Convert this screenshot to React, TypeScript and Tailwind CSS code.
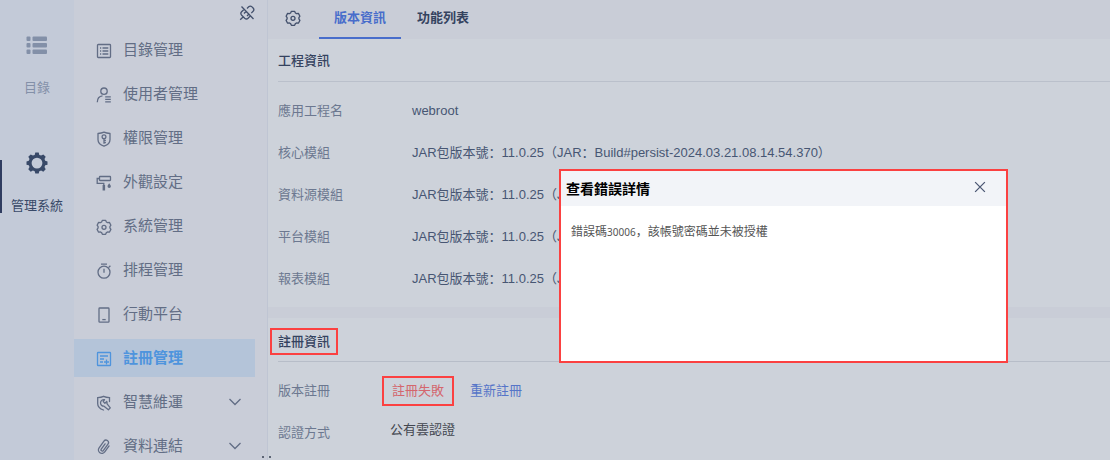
import { useState, type ReactNode } from "react";
import clsx from "clsx";

function Icon({ children, className }: { children: ReactNode; className?: string }) {
  return (
    <svg
      viewBox="0 0 16 16"
      fill="none"
      stroke="currentColor"
      strokeWidth="1.3"
      aria-hidden="true"
      className={clsx("shrink-0", className ?? "size-4")}
    >
      {children}
    </svg>
  );
}

const hexGear = (
  <>
    <path
      strokeLinejoin="round"
      d="M6.400 1.300h3.200l.8 1.700 1.100.6 1.900-.2 1.500 2.800-1 1.500v1.200l1 1.500-1.500 2.800-1.900-.2-1.100.6-.8 1.700H6.400l-.8-1.700-1.100-.6-1.900.2-1.500-2.800 1-1.500V7.700l-1-1.500 1.500-2.800 1.900.2 1.100-.6z"
    />
    <circle cx="8" cy="8.300" r="2" />
  </>
);

type Item = { label: string; icon: ReactNode; more?: boolean };

const items: Item[] = [
  {
    label: "目錄管理",
    icon: (
      <>
        <rect x="1.500" y="1.500" width="13" height="13" rx=".8" />
        <path d="M4 5h1.200M4 8h1.200M4 11h1.200M6.500 5h5.800M6.500 8h5.800M6.500 11h5.800" />
      </>
    ),
  },
  {
    label: "使用者管理",
    icon: (
      <>
        <circle cx="8" cy="4.200" r="3.200" />
        <path d="M1.300 15.300c0-3.600 2-6 5.200-6.400M9.200 9.800h5.600M9.200 12.300h5.600M9.200 14.800h5.600" />
      </>
    ),
  },
  {
    label: "權限管理",
    icon: (
      <>
        <path strokeLinejoin="round" d="M8 1.200c2 .9 4 1.200 6 1.300v6.300c0 3-2.500 5.200-6 6.400-3.500-1.200-6-3.400-6-6.400V2.500c2-.1 4-.4 6-1.300z" />
        <circle cx="8" cy="5.800" r="1.900" />
        <path d="M8 7.700v5M8 9.500h1.900M8 11.700h1.900" />
      </>
    ),
  },
  {
    label: "外觀設定",
    icon: (
      <>
        <rect x="3.500" y="1.500" width="11" height="4" rx=".5" />
        <path d="M3.500 3.500H1.200v4.800h6.600v2" />
        <path d="M6.600 10h2.500v5.500H6.600z" fill="currentColor" stroke="none" />
        <path d="M13.200 8.200c1 1.400 1.700 2.200 1.700 3.100a1.700 1.700 0 0 1-3.400 0c0-.9.7-1.700 1.700-3.100z" fill="currentColor" stroke="none" />
      </>
    ),
  },
  { label: "系統管理", icon: hexGear },
  {
    label: "排程管理",
    icon: (
      <>
        <circle cx="8" cy="9.200" r="6" />
        <path d="M5 1.200h6M8 5.800v4M12.500 4.600l1.900-1.900" />
      </>
    ),
  },
  {
    label: "行動平台",
    icon: (
      <>
        <rect x="3" y="1" width="10" height="14.200" rx=".8" />
        <path d="M6.300 12.600h3.400" />
      </>
    ),
  },
  {
    label: "註冊管理",
    icon: (
      <>
        <rect x="1.500" y="1.500" width="13" height="13" rx=".6" />
        <path d="M4 5h8M4 8h4M4 11h3M8 11h5M10.500 8.500v5" />
      </>
    ),
  },
  {
    label: "智慧維運",
    more: true,
    icon: (
      <>
        <path strokeLinecap="round" d="M7.500 15C4 13.800 1.700 11.700 1.700 8.700V2.600c2.200-.1 4-.4 5.900-1.300 1.900.9 3.800 1.200 5.900 1.300v4" />
        <path strokeLinejoin="round" d="M8.600 4.700a3.300 3.300 0 1 0-.6 6.500l4.400 3.600 1.900-1.900-3.400-4.200c.3-.8.2-1.600-.1-2.300L8.900 8.200 7.200 6.600z" />
      </>
    ),
  },
  {
    label: "資料連結",
    more: true,
    icon: (
      <path
        strokeLinecap="round"
        transform="rotate(36 8 8)"
        d="M11.500 4.200v7.300a3.500 3.500 0 0 1-7 0V3.300a2.500 2.500 0 0 1 5 0v8a1.250 1.250 0 0 1-2.500 0V4.800"
      />
    ),
  },
];

const build = "JAR包版本號：11.0.25（JAR：Build#persist-2024.03.21.08.14.54.370）";
const shortBuild = "JAR包版本號：11.0.25（J";

const modules = [
  ["應用工程名", "webroot"],
  ["核心模組", build],
  ["資料源模組", shortBuild],
  ["平台模組", shortBuild],
  ["報表模組", shortBuild],
];

function Rail() {
  return (
    <nav className="flex w-[74px] shrink-0 flex-col bg-[#c3cad8] pt-[33px] text-[13px] leading-5">
      <a href="#catalog" className="flex flex-col items-center gap-[21px] text-[#8390a8]">
        <svg viewBox="0 0 22 24" className="h-6 w-[22px]" fill="currentColor" aria-hidden="true">
          <rect x="0.500" y="3.500" width="4" height="4.500" rx="1" />
          <rect x="6.500" y="3.500" width="14.500" height="4.500" rx="1" />
          <rect x="0.500" y="10" width="4" height="4.500" rx="1" />
          <rect x="6.500" y="10" width="14.500" height="4.500" rx="1" />
          <rect x="0.500" y="16.500" width="4" height="4.500" rx="1" />
          <rect x="6.500" y="16.500" width="14.500" height="4.500" rx="1" />
        </svg>
        目錄
      </a>
      <a
        href="#system"
        className="relative mt-[53px] flex flex-col items-center gap-[21px] text-[#384968] before:absolute before:top-[9px] before:left-0 before:h-[53px] before:w-[2px] before:bg-[#2f3c60]"
      >
        <svg viewBox="0 0 24 24" className="size-6" fill="currentColor" fillRule="evenodd" aria-hidden="true">
          <path d="M10.300 1.500h3.400l.6 2.400 1.800.7 2.200-1.200 2.400 2.400-1.200 2.200.7 1.800 2.300.6v3.300l-2.300.6-.7 1.800 1.200 2.200-2.400 2.400-2.200-1.200-1.800.7-.6 2.300h-3.400l-.6-2.300-1.800-.7-2.200 1.200-2.400-2.400 1.200-2.200-.7-1.800-2.300-.6v-3.300l2.300-.6.7-1.800-1.200-2.200 2.400-2.400 2.200 1.200 1.800-.7zM12 6.700a5.400 5.400 0 1 0 0 10.800 5.400 5.400 0 0 0 0-10.800z" />
        </svg>
        管理系統
      </a>
    </nav>
  );
}

function Sidebar() {
  return (
    <aside className="relative w-[194px] shrink-0 border-r border-[#bfc5d3] bg-[#c9cdd8] pt-7 text-[#626d85]">
      <button type="button" aria-label="取消固定" className="absolute top-[5px] right-3 text-[#43506c]">
        <Icon>
          <path strokeLinejoin="round" d="M5.200 4.200 2.600 6.800c-1 1.100-.9 2.400.1 3.400l3 3c1.100 1 2.400 1 3.400 0l2.500-2.600M8 3.500l1.700-1.700c1.100-1 2.300-.9 3.300.1l1.100 1.100c1 1.100 1 2.300 0 3.300l-1.800 1.800M1.200 14.800l2.600-2.600M5 8.500 7 6.500M8 11l1.500-1.500M2.500 1.500l12 12.500" />
        </Icon>
      </button>
      <ul>
        {items.map((item) => {
          const active = item.label === "註冊管理";
          return (
            <li key={item.label} className="py-[3px] pr-3">
              <a
                href={`#${item.label}`}
                aria-current={active ? "page" : undefined}
                className={clsx(
                  "flex h-[38px] items-center pr-3 pl-[22px] text-[15px] leading-6",
                  active && "bg-[#b4c4d9] font-bold text-[#4e94dd]",
                )}
              >
                <Icon className="mt-[2px] size-4">{item.icon}</Icon>
                <span className="ml-[11px] flex-1">{item.label}</span>
                {item.more && (
                  <Icon className="size-4">
                    <path d="m2.500 5 5.500 5.500L13.500 5" />
                  </Icon>
                )}
              </a>
            </li>
          );
        })}
      </ul>
      <span className="absolute -right-1 bottom-[2px] z-10 flex gap-[5px]" aria-hidden="true">
        <i className="size-[2px] bg-[#5d6575]" />
        <i className="size-[2px] bg-[#5d6575]" />
      </span>
    </aside>
  );
}

function Dialog({ onClose }: { onClose: () => void }) {
  return (
    <section
      role="dialog"
      aria-labelledby="dialog-title"
      className="absolute top-[169px] right-[102px] z-20 flex h-[194px] w-[449px] flex-col border-2 border-[#fb4141] bg-white"
    >
      <header className="flex h-[35px] shrink-0 items-center justify-between bg-[#f2f4f8] pr-5 pl-[5px]">
        <h2 id="dialog-title" className="text-[14px] leading-5 font-bold text-black">
          查看錯誤詳情
        </h2>
        <button type="button" aria-label="關閉" onClick={onClose} className="mb-1 text-[#4a5672]">
          <Icon className="size-3">
            <path strokeWidth="1.700" d="m1.500 1.500 13 13M14.500 1.500l-13 13" />
          </Icon>
        </button>
      </header>
      <p className="px-[10px] pt-4 font-['Noto_Sans','Noto_Sans_CJK_SC',sans-serif] text-[12px] leading-5 text-[#555]">
        錯誤碼<span className="text-[10px]">30006</span>，該帳號密碼並未被授權
      </p>
    </section>
  );
}

export default function App() {
  const [open, setOpen] = useState(true);
  return (
    <div className="relative h-screen overflow-hidden bg-white pb-[3px] font-['Liberation_Sans','Noto_Sans_CJK_SC',sans-serif]">
      <div className="flex h-full overflow-hidden">
        <Rail />
        <Sidebar />
        <main className="min-w-0 flex-1 bg-[#cdd2da] text-[13px] leading-5">
          <div className="flex h-[39px] items-stretch bg-[#c9cdd7] pl-[17px] font-bold text-[#35435f]">
            <button type="button" aria-label="設定" className="mr-[18px] pb-[3px] text-[#43506c]">
              <Icon>{hexGear}</Icon>
            </button>
            <button type="button" className="border-b-2 border-[#486dcb] px-[15px] pb-[2px] text-[#486dcb]">
              版本資訊
            </button>
            <button type="button" className="px-4 pb-1">
              功能列表
            </button>
          </div>
          <section className="h-[268px] pl-[10px]">
            <h2 className="border-b border-[#bac0cb] pt-3 pb-[10px] font-medium text-[#35435f]">工程資訊</h2>
            <dl className="pt-2">
              {modules.map(([name, value]) => (
                <div key={name} className="flex h-[42px] items-center">
                  <dt className="w-[134px] shrink-0 text-[#6c7890]">{name}</dt>
                  <dd className="whitespace-nowrap text-[#475673]">{value}</dd>
                </div>
              ))}
            </dl>
          </section>
          <div className="h-[11px] bg-[#c9cdd7]" />
          <section className="pl-[10px]">
            <h2 className="flex border-b border-[#b7bdc8] pt-[10px] pb-[6px] font-medium text-[#35435f]">
              <span className="-ml-2 border-2 border-[#fb4141] px-[6px] leading-[23px]">註冊資訊</span>
            </h2>
            <dl className="pt-2">
              <div className="flex h-[42px] items-center">
                <dt className="w-[104px] shrink-0 text-[#6c7890]">版本註冊</dt>
                <dd className="flex items-center gap-4">
                  <span className="border-2 border-[#fb4141] px-2 py-[3px] text-[#d4666d]">註冊失敗</span>
                  <a href="#register" className="text-[#5675c8]">
                    重新註冊
                  </a>
                </dd>
              </div>
              <div className="flex h-[42px] items-center">
                <dt className="w-[112px] shrink-0 text-[#6c7890]">認證方式</dt>
                <dd className="pb-[6px] text-[#42464f]">公有雲認證</dd>
              </div>
            </dl>
          </section>
        </main>
      </div>
      {open && <Dialog onClose={() => setOpen(false)} />}
    </div>
  );
}
